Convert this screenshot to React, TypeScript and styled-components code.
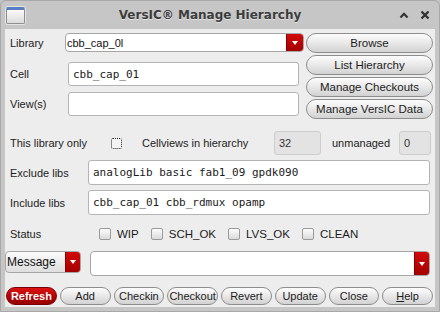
import * as React from "react";
import styled, { createGlobalStyle, css } from "styled-components";

const GlobalStyle = createGlobalStyle`
  html, body {
    margin: 0;
    padding: 0;
    background: #c4c4c4;
  }
  body {
    font-family: "Liberation Sans", Arial, sans-serif;
    font-size: 11px;
    color: #1c1c1c;
  }
`;

const Window = styled.div`
  width: 440px;
  height: 312px;
  box-sizing: border-box;
  display: flex;
  flex-direction: column;
  background: #c6c6c6;
  border: 1px solid #a8a8a8;
  border-radius: 6px 6px 0 0;
  overflow: hidden;
`;

const TitleBar = styled.div`
  height: 28px;
  flex: none;
  display: grid;
  grid-template-columns: 1fr auto 1fr;
  align-items: center;
  padding: 0 4px;
`;

const WinIcon = styled.div`
  width: 19px;
  height: 17px;
  box-sizing: border-box;
  border: 1px solid #8e8e8e;
  border-top: 3px solid #5a7fc0;
  border-radius: 2px;
  background: linear-gradient(#fafafa, #dcdcdc);
  box-shadow: 0 0 0 1px #e4e4e4;
  margin-left: 1px;
`;

const Title = styled.div`
  font-family: "DejaVu Sans", sans-serif;
  font-weight: bold;
  font-size: 12px;
  color: #3c3c3c;
  text-shadow: 0 1px 0 #e2e2e2;
  margin-right: 20px;
`;

const Controls = styled.div`
  justify-self: end;
  display: flex;
  align-items: center;
  gap: 11px;
  padding-right: 5px;
`;

const Content = styled.div`
  flex: 1;
  margin: 0 4px 4px 4px;
  background: #ededed;
  display: flex;
  flex-direction: column;
  padding: 4px 2px 0 0;
`;

const TopSection = styled.div`
  display: flex;
  align-items: flex-start;
  gap: 2px;
`;

const LeftCol = styled.div`
  width: 299px;
  display: flex;
  flex-direction: column;
`;

const RightCol = styled.div`
  width: 127px;
  display: flex;
  flex-direction: column;
  gap: 2px;
`;

const Row = styled.div<{ $top?: number; $h?: number }>`
  display: flex;
  align-items: center;
  margin-top: ${(p) => p.$top ?? 0}px;
  height: ${(p) => p.$h ?? 24}px;
  padding-left: 5px;
`;

const Label = styled.span<{ $w?: number; $left?: number }>`
  flex: none;
  width: ${(p) => (p.$w ? `${p.$w}px` : "auto")};
  margin-left: ${(p) => p.$left ?? 0}px;
  white-space: nowrap;
`;

const Field = styled.div<{ $w?: number; $disabled?: boolean }>`
  box-sizing: border-box;
  height: 100%;
  width: ${(p) => (p.$w ? `${p.$w}px` : "auto")};
  flex: ${(p) => (p.$w ? "none" : "1")};
  display: flex;
  align-items: center;
  padding: 0 4px;
  background: #fff;
  border: 1px solid #b4b4b4;
  border-radius: 3px;
  font-family: "DejaVu Sans Mono", monospace;
  font-size: 11px;
  color: #1a1a1a;
  white-space: nowrap;
  ${(p) =>
    p.$disabled &&
    css`
      background: #e3e3e3;
      border-color: #cdcdcd;
      font-family: "Liberation Sans", Arial, sans-serif;
      color: #333;
    `}
`;

const Combo = styled.div<{ $w: number; $h?: number; $left?: number; $light?: boolean }>`
  box-sizing: border-box;
  height: ${(p) => (p.$h ? `${p.$h}px` : "100%")};
  width: ${(p) => p.$w}px;
  margin-left: ${(p) => p.$left ?? 0}px;
  flex: none;
  display: flex;
  align-items: stretch;
  border: 1px solid #a6a6a6;
  border-radius: 4px;
  overflow: hidden;
  background: ${(p) => (p.$light ? "linear-gradient(#fbfbfb, #dedede)" : "#fff")};
`;

const ComboText = styled.span<{ $size?: number }>`
  flex: 1;
  display: flex;
  align-items: center;
  padding-left: 1px;
  font-size: ${(p) => p.$size ?? 11}px;
  white-space: nowrap;
  color: #111;
`;

const ComboArrow = styled.span<{ $w: number }>`
  width: ${(p) => p.$w}px;
  flex: none;
  display: flex;
  align-items: center;
  justify-content: center;
  background: linear-gradient(#d10a0a, #a40000);
  border-left: 1px solid #8a0000;
  &::after {
    content: "";
    border-left: 3.5px solid transparent;
    border-right: 3.5px solid transparent;
    border-top: 4px solid #fff;
  }
`;

const Button = styled.button<{ $red?: boolean }>`
  box-sizing: border-box;
  height: 20px;
  padding: 0;
  border: 1px solid #8d8d8d;
  border-radius: 10px;
  background: linear-gradient(#fdfdfd, #e6e6e6 55%, #d2d2d2);
  font-family: "Liberation Sans", Arial, sans-serif;
  font-size: 11.5px;
  color: #1c1c1c;
  white-space: nowrap;
  cursor: default;
  ${(p) =>
    p.$red &&
    css`
      background: linear-gradient(#dc1414, #b00000 60%, #980000);
      border-color: #7a0000;
      color: #fff;
      font-weight: bold;
    `}
`;

const FooterButton = styled(Button)`
  flex: 1;
  height: 18px;
  border-radius: 9px;
  font-size: 11px;
`;

const FocusBox = styled.span`
  width: 9px;
  height: 9px;
  flex: none;
  border: 1px dotted #222;
  border-radius: 2px;
  background: #f4f4f4;
`;

const CheckBox = styled.span`
  box-sizing: border-box;
  width: 12px;
  height: 12px;
  flex: none;
  border: 1px solid #9a9a9a;
  border-radius: 2px;
  background: linear-gradient(#fdfdfd, #dadada);
`;

const CheckItem = styled.label`
  display: flex;
  align-items: center;
  gap: 6px;
  font-size: 11.5px;
`;

const CheckGroup = styled.div`
  display: flex;
  align-items: center;
  gap: 12px;
`;

const MessageRow = styled.div`
  display: flex;
  align-items: flex-start;
  margin-top: 11px;
  height: 25px;
`;

const Footer = styled.div`
  display: flex;
  gap: 3px;
  margin-top: 11px;
  padding-left: 1px;
`;

const Underline = styled.span`
  text-decoration: underline;
`;

const App: React.FC = () => {
  return (
    <React.Fragment>
      <GlobalStyle />
      <Window>
        <TitleBar>
          <WinIcon />
          <Title>VersIC® Manage Hierarchy</Title>
          <Controls>
            <svg width="10" height="8" viewBox="0 0 10 8">
              <path d="M1.5 6.5 L5 2.8 L8.5 6.5" fill="none" stroke="#333" strokeWidth="2.2" />
            </svg>
            <svg width="10" height="10" viewBox="0 0 10 10">
              <path d="M1.5 1.5 L8.5 8.5 M8.5 1.5 L1.5 8.5" stroke="#333" strokeWidth="2.4" />
            </svg>
          </Controls>
        </TitleBar>
        <Content>
          <TopSection>
            <LeftCol>
              <Row $h={19}>
                <Label $w={55}>Library</Label>
                <Combo $w={239}>
                  <ComboText>cbb_cap_0l</ComboText>
                  <ComboArrow $w={16} />
                </Combo>
              </Row>
              <Row $top={10}>
                <Label $w={58}>Cell</Label>
                <Field $w={231}>cbb_cap_01</Field>
              </Row>
              <Row $top={6}>
                <Label $w={58}>View(s)</Label>
                <Field $w={231} />
              </Row>
            </LeftCol>
            <RightCol>
              <Button>Browse</Button>
              <Button>List Hierarchy</Button>
              <Button>Manage Checkouts</Button>
              <Button>Manage VersIC Data</Button>
            </RightCol>
          </TopSection>
          <Row $top={12}>
            <Label $w={101}>This library only</Label>
            <FocusBox />
            <Label $w={132} $left={20}>Cellviews in hierarchy</Label>
            <Field $w={47} $disabled>32</Field>
            <Label $w={67} $left={11}>unmanaged</Label>
            <Field $w={32} $disabled>0</Field>
          </Row>
          <Row $top={5} $h={25}>
            <Label $w={78}>Exclude libs</Label>
            <Field $w={342}>analogLib basic fab1_09 gpdk090</Field>
          </Row>
          <Row $top={5} $h={25}>
            <Label $w={78}>Include libs</Label>
            <Field $w={342}>cbb_cap_01 cbb_rdmux opamp</Field>
          </Row>
          <Row $top={13} $h={12}>
            <Label $w={89}>Status</Label>
            <CheckGroup>
              <CheckItem><CheckBox />WIP</CheckItem>
              <CheckItem><CheckBox />SCH_OK</CheckItem>
              <CheckItem><CheckBox />LVS_OK</CheckItem>
              <CheckItem><CheckBox />CLEAN</CheckItem>
            </CheckGroup>
          </Row>
          <MessageRow>
            <Combo $w={76} $h={22} $light>
              <ComboText $size={12}>Message</ComboText>
              <ComboArrow $w={14} />
            </Combo>
            <Combo $w={340} $left={9}>
              <ComboText />
              <ComboArrow $w={14} />
            </Combo>
          </MessageRow>
          <Footer>
            <FooterButton $red>Refresh</FooterButton>
            <FooterButton>Add</FooterButton>
            <FooterButton>Checkin</FooterButton>
            <FooterButton>Checkout</FooterButton>
            <FooterButton>Revert</FooterButton>
            <FooterButton>Update</FooterButton>
            <FooterButton>Close</FooterButton>
            <FooterButton><Underline>H</Underline>elp</FooterButton>
          </Footer>
        </Content>
      </Window>
    </React.Fragment>
  );
};

export default App;
